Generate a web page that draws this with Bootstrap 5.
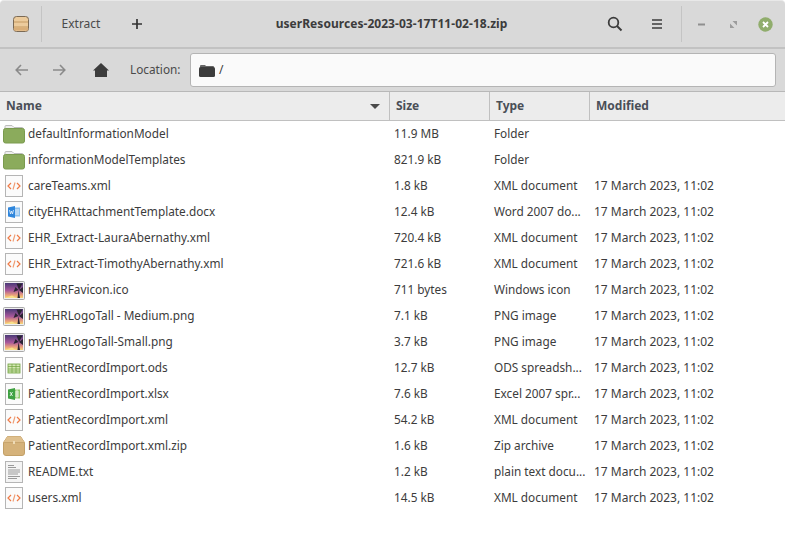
<!DOCTYPE html>
<html lang="en">
<head>
  <meta charset="UTF-8">
  <title>userResources-2023-03-17T11-02-18.zip</title>
  <link href="https://cdn.jsdelivr.net/npm/bootstrap@5.3.0/dist/css/bootstrap.min.css" rel="stylesheet">
  <style>
    body {
      background-color: #fff;
      font-family: "Noto Sans", sans-serif;
      font-size: 12px;
      color: #3c3c3c;
      margin: 0;
      overflow: hidden;
    }
    .title-bar {
      height: 49px;
      background-color: #d9d9d9;
      border-top: 1px solid #e8e8e8;
      border-bottom: 2px solid #c2c2c2;
      border-radius: 4px 4px 0 0;
    }
    .app-cell { width: 42px; border-right: 1px solid #c4c4c4; height: 36px; }
    .extract-label { width: 78px; text-align: center; color: #4a4a4a; }
    .plus-ic { margin-left: 11px; }
    .file-title { font-weight: 700; color: #3c3c3c; left: 0; right: 2px; top: 14px; text-align: center; line-height: 18px; letter-spacing: .05px; }
    .menu-ic { margin-left: 28px; margin-right: 18px; }
    .wm-cell { width: 104px; border-left: 1px solid #c4c4c4; height: 36px; }
    .wm-min { margin-left: 16px; }
    .wm-max { margin-left: 25px; }
    .wm-close { margin-left: 21px; }
    .path-bar {
      height: 43px;
      background-color: #d9d9d9;
      border-bottom: 1px solid #b8b8b8;
    }
    .nav-back { margin-left: 15px; }
    .nav-next { margin-left: 23px; }
    .nav-home { margin-left: 27px; }
    .location-label { margin-left: 21px; width: 51px; color: #4a4a4a; font-size: 11.8px; white-space: nowrap; }
    .path-box {
      height: 34px;
      width: 586px;
      margin-left: 9px;
      background-color: #fafafa;
      border: 1px solid #b4b4b4;
      border-radius: 3px;
    }
    .path-folder { margin-left: 8px; }
    .list-head {
      height: 29px;
      background-color: #ececec;
      border-bottom: 1px solid #c0c0c0;
      font-weight: 700;
      color: #4a4f57;
    }
    .col-name { width: 390px; }
    .col-size { width: 100px; }
    .col-type { width: 100px; }
    .head-cell { height: 28px; padding-left: 6px; line-height: 28px; border-right: 1px solid #c0c0c0; }
    .sort-ic { margin-right: 9px; }
    .file-row { height: 26px; line-height: 25px; color: #3c3c3c; font-size: 11.8px; }
    .file-row .cell-size, .file-row .cell-type, .file-row .cell-mod { padding-left: 4px; white-space: nowrap; }
    .file-row .cell-mod { flex: 1; font-size: 12px; line-height: 26px; }
    .icon-slot { width: 28px; height: 26px; }
    svg { display: block; }
  </style>
</head>
<body>
  <svg width="0" height="0" class="position-absolute">
    <symbol id="ic-folder" viewBox="0 0 22 20">
      <path d="M2 5V2.500Q2 1.500 3 1.500H9L11 3.500H19Q20 3.500 20 4.500V6Z" fill="#eee" stroke="#bdbdbd"/>
      <rect x=".5" y="4.500" width="21" height="14.500" rx="2" fill="#8bab5c" stroke="#7a9a4e"/>
    </symbol>
    <symbol id="ic-xml" viewBox="0 0 18 22">
      <rect x=".5" y=".5" width="17" height="21" fill="#fbfbfb" stroke="#b5b5b5"/>
      <path d="M6 8 3 11l3 3M12 8l3 3-3 3" fill="none" stroke="#ef7a45" stroke-width="1.200"/>
      <path d="M10 7.500 8 14.500" fill="none" stroke="#ef9a70" stroke-width="1.100"/>
    </symbol>
    <symbol id="ic-docx" viewBox="0 0 18 22">
      <rect x=".5" y=".5" width="17" height="21" fill="#fbfbfb" stroke="#b5b5b5"/>
      <rect x="9" y="6.500" width="6" height="9" fill="#8cc0ee"/>
      <path d="M10 9h4M10 11h4M10 13h4" stroke="#fff" stroke-width=".8"/>
      <path d="M3 6.500 10 5v12L3 15.500Z" fill="#2f86dc"/>
      <path d="M4.500 9 5.500 13 6.500 10 7.500 13 8.500 9" fill="none" stroke="#fff" stroke-width=".7"/>
    </symbol>
    <symbol id="ic-image" viewBox="0 0 22 19">
      <defs>
        <linearGradient id="sunset" x1="0" y1="0" x2="0" y2="1">
          <stop offset="0" stop-color="#4b3a78"/>
          <stop offset=".5" stop-color="#a8589a"/>
          <stop offset=".8" stop-color="#eaa07c"/>
          <stop offset="1" stop-color="#f6d878"/>
        </linearGradient>
      </defs>
      <rect x=".5" y=".5" width="21" height="18" rx="1" fill="#efefef" stroke="#a9a9a9"/>
      <rect x="2" y="2" width="18" height="15" fill="url(#sunset)"/>
      <path d="M2 17 9 14.500 13 17Z" fill="#f8e08a"/>
      <path d="M14.500 17 15.500 9 17 17ZM15.500 9 10.500 11 12.500 6ZM16 9 20 12V6ZM16 9 13.500 2.500H19.500Z" fill="#2b2433"/>
    </symbol>
    <symbol id="ic-ods" viewBox="0 0 18 22">
      <rect x=".5" y=".5" width="17" height="21" fill="#fbfbfb" stroke="#b5b5b5"/>
      <rect x="3" y="7" width="12" height="9" fill="#d4e6b4" stroke="#6fa23c" stroke-width=".8"/>
      <path d="M3 9.500h12M3 12h12M3 14h12M7 7v9M11 7v9" stroke="#6fa23c" stroke-width=".7"/>
    </symbol>
    <symbol id="ic-xlsx" viewBox="0 0 18 22">
      <rect x=".5" y=".5" width="17" height="21" fill="#fbfbfb" stroke="#b5b5b5"/>
      <rect x="9" y="6.500" width="6" height="9" fill="#8ec76a"/>
      <path d="M10 9h4M10 11h4M10 13h4M12 6.500v9" stroke="#fff" stroke-width=".8"/>
      <path d="M3 6.500 10 5v12L3 15.500Z" fill="#3fa142"/>
      <path d="M5 9l2.500 4M7.500 9 5 13" stroke="#fff" stroke-width=".8"/>
    </symbol>
    <symbol id="ic-zip" viewBox="0 0 22 20">
      <path d="M4.500.5H17.500L21.500 6.500V17Q21.500 19.500 19 19.500H3Q.5 19.500.5 17V6.500Z" fill="#d5b27a" stroke="#c2a068"/>
      <path d="M4.500.5H17.500L21.500 6.500H.5Z" fill="#dfc08e"/>
      <path d="M.5 6.500H21.500" stroke="#c8a56e"/>
      <rect x="10" y="5" width="2" height="3" fill="#eedbb6"/>
    </symbol>
    <symbol id="ic-txt" viewBox="0 0 18 22">
      <rect x=".5" y=".5" width="17" height="21" fill="#f4f4f4" stroke="#b5b5b5"/>
      <path d="M3 4.500h6M3 6.500h8M3 9h12M3 11h12M3 13h10M3 15.500h12M3 17.500h9" stroke="#9a9a9a" stroke-width="1.100"/>
    </symbol>
  </svg>

  <header class="title-bar position-relative d-flex align-items-center">
    <div class="app-cell d-flex align-items-center justify-content-center flex-shrink-0 ms-0">
      <svg width="16" height="16" viewBox="0 0 16 16">
        <rect x=".5" y=".5" width="15" height="15" rx="3" fill="#eccb9c" stroke="#7b6a55"/>
        <path d="M1 6h14" stroke="#c49a62"/><path d="M1 11h14" stroke="#c49a62"/>
        <rect x="1" y="11.500" width="14" height="3" fill="#d9ae78"/>
      </svg>
    </div>
    <div class="extract-label">Extract</div>
    <svg width="12" height="12" viewBox="0 0 12 12" class="plus-ic"><path d="M6 1v10M1 6h10" stroke="#333" stroke-width="1.700"/></svg>
    <div class="file-title position-absolute">userResources-2023-03-17T11-02-18.zip</div>
    <div class="ms-auto d-flex align-items-center">
      <svg width="16" height="16" viewBox="0 0 16 16"><circle cx="6.500" cy="6.500" r="4.800" fill="none" stroke="#3c3c3c" stroke-width="1.800"/><path d="M10 10l4.500 4.500" stroke="#3c3c3c" stroke-width="2"/></svg>
      <svg width="12" height="12" viewBox="0 0 12 12" class="menu-ic"><path d="M1 2h10M1 6h10M1 10h10" stroke="#3c3c3c" stroke-width="1.700"/></svg>
    </div>
    <div class="wm-cell d-flex align-items-center flex-shrink-0">
      <svg width="7" height="3" viewBox="0 0 7 3" class="wm-min"><path d="M0 1.500h7" stroke="#8f8f8f" stroke-width="2"/></svg>
      <svg width="7" height="7" viewBox="0 0 7 7" class="wm-max"><path d="M2.500 0H7V4.500ZM0 2.500 4.500 7H0Z" fill="#9c9c9c"/></svg>
      <svg width="15" height="15" viewBox="0 0 15 15" class="wm-close"><circle cx="7.500" cy="7.500" r="7.200" fill="#90ad6c"/><path d="M5 5l5 5M10 5l-5 5" stroke="#fff" stroke-width="1.800"/></svg>
    </div>
  </header>

  <div class="path-bar d-flex align-items-center">
    <svg width="14" height="12" viewBox="0 0 14 12" class="nav-back"><path d="M6 1 1.200 6 6 11M1.500 6H13" fill="none" stroke="#8a8a8a" stroke-width="1.600"/></svg>
    <svg width="14" height="12" viewBox="0 0 14 12" class="nav-next"><path d="M8 1 12.800 6 8 11M12.500 6H1" fill="none" stroke="#8a8a8a" stroke-width="1.600"/></svg>
    <svg width="16" height="14" viewBox="0 0 16 14" class="nav-home"><path d="M8 0 16 7.500H14V14H2V7.500H0Z" fill="#3c3c3c"/></svg>
    <span class="location-label">Location:</span>
    <div class="path-box d-flex align-items-center flex-grow-0">
      <svg width="16" height="13" viewBox="0 0 16 13" class="path-folder"><path d="M1 3V2Q1 1 2 1H6L7 2H14Q15 2 15 3Z" fill="#666"/><rect y="3" width="16" height="10" rx="1.500" fill="#3c3c3c"/></svg>
      <span class="ms-1">/</span>
    </div>
  </div>

  <div class="list-head d-flex">
    <div class="head-cell col-name d-flex justify-content-between align-items-center">
      <span>Name</span>
      <svg width="10" height="5" viewBox="0 0 10 5" class="sort-ic"><path d="M0 0h10L5 5Z" fill="#4a4a4a"/></svg>
    </div>
    <div class="head-cell col-size">Size</div>
    <div class="head-cell col-type">Type</div>
    <div class="head-cell flex-grow-1 border-0">Modified</div>
  </div>

  <main id="file-list"></main>

  <script src="https://cdn.jsdelivr.net/npm/bootstrap@5.3.0/dist/js/bootstrap.bundle.min.js"></script>
  <script>
    const mod = "17 March 2023, 11:02";
    const files = [
      ["folder", "defaultInformationModel", "11.9 MB", "Folder", ""],
      ["folder", "informationModelTemplates", "821.9 kB", "Folder", ""],
      ["xml", "careTeams.xml", "1.8 kB", "XML document", mod],
      ["docx", "cityEHRAttachmentTemplate.docx", "12.4 kB", "Word 2007 do...", mod],
      ["xml", "EHR_Extract-LauraAbernathy.xml", "720.4 kB", "XML document", mod],
      ["xml", "EHR_Extract-TimothyAbernathy.xml", "721.6 kB", "XML document", mod],
      ["image", "myEHRFavicon.ico", "711 bytes", "Windows icon", mod],
      ["image", "myEHRLogoTall - Medium.png", "7.1 kB", "PNG image", mod],
      ["image", "myEHRLogoTall-Small.png", "3.7 kB", "PNG image", mod],
      ["ods", "PatientRecordImport.ods", "12.7 kB", "ODS spreadsh...", mod],
      ["xlsx", "PatientRecordImport.xlsx", "7.6 kB", "Excel 2007 spr...", mod],
      ["xml", "PatientRecordImport.xml", "54.2 kB", "XML document", mod],
      ["zip", "PatientRecordImport.xml.zip", "1.6 kB", "Zip archive", mod],
      ["txt", "README.txt", "1.2 kB", "plain text docu...", mod],
      ["xml", "users.xml", "14.5 kB", "XML document", mod]
    ];
    const sizes = { folder: [22, 20], image: [22, 19], zip: [22, 20] };

    document.getElementById("file-list").innerHTML = files.map(f => {
      const [w, h] = sizes[f[0]] || [18, 22];
      return `<div class="file-row d-flex">
        <div class="col-name d-flex">
          <div class="icon-slot d-flex align-items-center justify-content-center flex-shrink-0">
            <svg width="${w}" height="${h}"><use href="#ic-${f[0]}"/></svg>
          </div>
          <span>${f[1]}</span>
        </div>
        <div class="col-size cell-size">${f[2]}</div>
        <div class="col-type cell-type">${f[3]}</div>
        <div class="cell-mod">${f[4]}</div>
      </div>`;
    }).join("");
  </script>
</body>
</html>
